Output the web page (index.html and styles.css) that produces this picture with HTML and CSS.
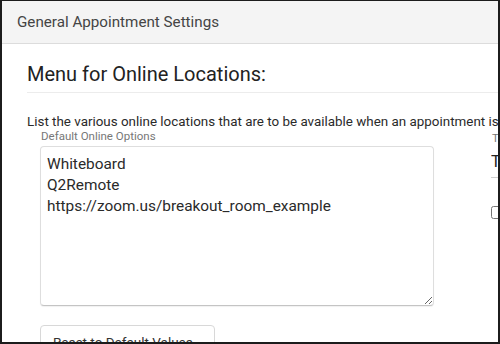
FILE: index.html
```html
<!DOCTYPE html>
<html lang="en">
<head>
    <meta charset="UTF-8">
    <meta name="viewport" content="width=device-width, initial-scale=1.0">
    <title>General Appointment Settings</title>
    <link rel="stylesheet" href="styles.css">
</head>
<body>
    <div class="frame">
        <div class="panel-header">General Appointment Settings</div>

        <div class="panel-body">
            <h2 class="section-title">Menu for Online Locations:</h2>

            <p class="section-desc">List the various online locations that are to be available when an appointment is created.</p>

            <div class="fields">
                <div class="field field-main">
                    <label class="field-label" for="onlineOptions">Default Online Options</label>
                    <textarea id="onlineOptions" class="options-box">Whiteboard
Q2Remote
https://zoom.us/breakout_room_example</textarea>
                    <button class="btn">Reset to Default Values</button>
                </div>

                <div class="field field-side">
                    <label class="field-label" for="topLabel">Tool</label>
                    <input id="topLabel" class="line-input" type="text" value="Tutor">
                    <label class="check-row">
                        <input type="checkbox">
                        <span>Allow</span>
                    </label>
                </div>
            </div>
        </div>
    </div>
</body>
</html>
```

FILE: styles.css
```css
* {
    box-sizing: border-box;
    margin: 0;
    padding: 0;
}

html, body {
    width: 500px;
    height: 344px;
    overflow: hidden;
    background: #1c1c1c;
}

body {
    font-family: Roboto, 'Liberation Sans', sans-serif;
    color: #333;
}

.frame {
    margin: 1px 2px 0 2px;
    height: 341px;
    background: #fff;
    overflow: hidden;
}

.panel-header {
    height: 43px;
    background: #f4f4f4;
    border-bottom: 1px solid #dcdcdc;
    padding: 12px 0 0 15px;
    font-size: 15.2px;
    color: #444;
}

.panel-body {
    padding: 17px 0 0 25px;
}

.section-title {
    font-size: 20px;
    font-weight: 400;
    color: #222;
    line-height: 26px;
    padding-bottom: 5px;
    border-bottom: 1px solid #ececec;
    white-space: nowrap;
}

.section-desc {
    margin-top: 20px;
    font-size: 13.4px;
    line-height: 17px;
    color: #2a2a2a;
    white-space: nowrap;
}

.fields {
    display: flex;
    gap: 57px;
    padding-left: 13px;
}

.field-main {
    display: flex;
    flex-direction: column;
    width: 394px;
    flex-shrink: 0;
}

.field-label {
    font-size: 11.5px;
    color: #777;
    line-height: 13px;
    padding-left: 1px;
    white-space: nowrap;
}

.options-box {
    margin-top: 3px;
    height: 160px;
    border: 1px solid #dedede;
    border-bottom-color: #c4c4c4;
    border-radius: 4px;
    padding: 7px 6px;
    font-family: Roboto, 'Liberation Sans', sans-serif;
    font-size: 15.4px;
    line-height: 21px;
    color: #2a2a2a;
    resize: vertical;
    box-shadow: 0 1px 1px rgba(0, 0, 0, 0.06);
}

.btn {
    align-self: flex-start;
    margin-top: 19px;
    width: 175px;
    height: 34px;
    background: #fff;
    border: 1px solid #d8d8d8;
    border-radius: 4px;
    font-family: Roboto, 'Liberation Sans', sans-serif;
    font-size: 13.5px;
    color: #333;
    text-align: left;
    padding-left: 12px;
}

.field-side {
    display: flex;
    flex-direction: column;
    flex-shrink: 0;
    width: 120px;
    margin-top: 2px;
}

.line-input {
    margin-top: 4px;
    border: none;
    border-bottom: 1px solid #cfcfcf;
    font-family: Roboto, 'Liberation Sans', sans-serif;
    font-size: 16px;
    color: #222;
    padding: 3px 0 6px;
    outline: none;
}

.check-row {
    margin-top: 26px;
    display: flex;
    align-items: center;
    gap: 6px;
    font-size: 14px;
}

.check-row input {
    width: 13px;
    height: 13px;
    margin: 0;
}
```
